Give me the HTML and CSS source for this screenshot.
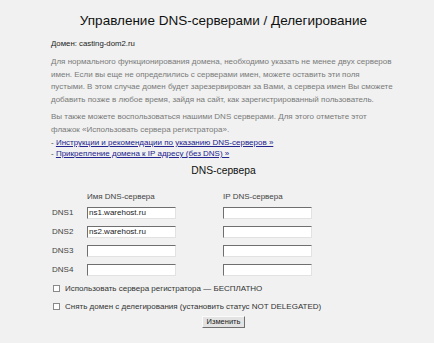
FILE: index.html
```html
<!DOCTYPE html>
<html lang="ru">
<head>
  <meta charset="UTF-8">
  <title>Управление DNS-серверами / Делегирование</title>
  <link rel="stylesheet" href="styles.css">
</head>
<body>
  <div class="page">
    <h1>Управление DNS-серверами / Делегирование</h1>

    <div class="domain">Домен: casting-dom2.ru</div>

    <p class="note">Для нормального функционирования домена, необходимо указать не менее двух серверов имен. Если вы еще не определились с серверами имен, можете оставить эти поля<br>пустыми. В этом случае домен будет зарезервирован за Вами, а сервера имен Вы сможете добавить позже в любое время, зайдя на сайт, как зарегистрированный пользователь.</p>

    <p class="note second">Вы также можете воспользоваться нашими DNS серверами. Для этого отметьте этот флажок «Использовать сервера регистратора».</p>

    <!-- Links -->
    <div class="links">
      <div>- <a href="#">Инструкции и рекомендации по указанию DNS-серверов »</a></div>
      <div>- <a href="#">Прикрепление домена к IP адресу (без DNS) »</a></div>
    </div>

    <h2>DNS-сервера</h2>

    <div class="dns-grid">
      <span></span>
      <span class="col-head">Имя DNS-сервера</span>
      <span class="col-head">IP DNS-сервера</span>

      <span class="label">DNS1</span>
      <input type="text" value="ns1.warehost.ru">
      <input type="text">

      <span class="label">DNS2</span>
      <input type="text" value="ns2.warehost.ru">
      <input type="text">

      <span class="label">DNS3</span>
      <input type="text">
      <input type="text">

      <span class="label">DNS4</span>
      <input type="text">
      <input type="text">
    </div>

    <label class="check"><span class="box"></span>Использовать сервера регистратора — БЕСПЛАТНО</label>
    <label class="check"><span class="box"></span>Снять домен с делегирования (установить статус NOT DELEGATED)</label>

    <div class="actions">
      <button type="button">Изменить</button>
    </div>
  </div>
</body>
</html>
```

FILE: styles.css
```css
body {
  margin: 0;
  padding: 0;
  background-color: #f0f1f0;
  font-family: "Liberation Sans", Arial, sans-serif;
  color: #222;
}

.page {
  width: 345px;
  margin-left: 51px;
  padding-top: 12px;
}

h1 {
  margin: 0;
  font-size: 13.5px;
  font-weight: normal;
  line-height: 18px;
  text-align: center;
  color: #111;
}

.domain {
  margin-top: 8px;
  font-size: 7.8px;
  line-height: 12px;
  color: #222;
}

.note {
  margin: 6px 0 0;
  font-size: 8px;
  line-height: 12.5px;
  color: #7a7a7a;
}

.note.second {
  margin-top: 5px;
}

/* Links */
.links {
  margin-top: 1px;
  font-size: 8px;
  line-height: 11px;
  color: #444;
}

.links a {
  color: #23238f;
}

h2 {
  margin: 5px 0 0;
  font-size: 10.3px;
  font-weight: normal;
  line-height: 14px;
  text-align: center;
  color: #111;
}

/* DNS table */
.dns-grid {
  display: grid;
  grid-template-columns: 36px 136px 1fr;
  grid-template-rows: 14px repeat(4, 19px);
  align-items: center;
  margin-top: 11px;
  font-size: 8px;
  color: #444;
}

.dns-grid .label {
  padding-left: 1px;
}

.dns-grid input {
  box-sizing: border-box;
  width: 89px;
  height: 12px;
  margin: 0;
  padding: 0 1px;
  border: 1px solid;
  border-color: #6f6f6f #e2e2e2 #e2e2e2 #6f6f6f;
  background-color: #fff;
  font-family: "Liberation Sans", Arial, sans-serif;
  font-size: 8px;
  color: #222;
  outline: none;
}

/* Checkboxes */
.check {
  display: flex;
  align-items: center;
  height: 18px;
  padding-left: 2px;
  font-size: 8px;
  color: #333;
}

.box {
  box-sizing: border-box;
  width: 7px;
  height: 7px;
  margin-right: 5px;
  border: 1px solid #8a8a8a;
  background-color: #fff;
}

.actions {
  display: flex;
  justify-content: center;
  margin-top: 1px;
}

.actions button {
  box-sizing: border-box;
  width: 43px;
  height: 12px;
  padding: 0;
  border: 1px solid;
  border-color: #fbfbfb #707070 #707070 #fbfbfb;
  background-color: #e3e3e3;
  font-family: "Liberation Sans", Arial, sans-serif;
  font-size: 7.5px;
  line-height: 10px;
  color: #222;
}
```
